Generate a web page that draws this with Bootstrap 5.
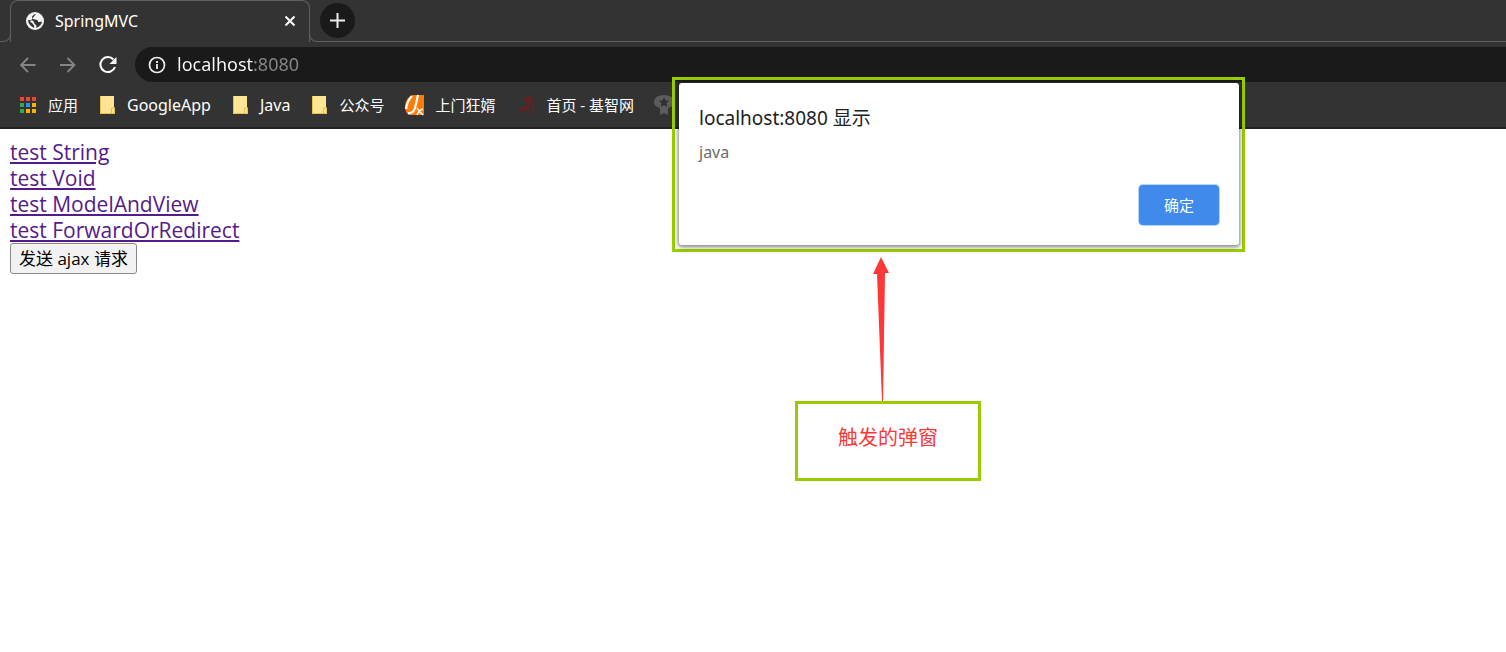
<!DOCTYPE html>
<html lang="zh-CN">
<head>
<meta charset="utf-8">
<meta name="viewport" content="width=device-width, initial-scale=1">
<title>SpringMVC</title>
<link href="https://cdn.jsdelivr.net/npm/bootstrap@5.3.0/dist/css/bootstrap.min.css" rel="stylesheet">
<style>
  body { font-family: "Noto Sans", "Noto Sans CJK SC", sans-serif; font-size: 15px; line-height: 20px; color: #000; background: #fff; }
  svg { display: block; flex: none; }
  button { flex: none; }
  .browser { background: #333; color: #fff; border-bottom: 2px solid #212121; }
  .tab-strip { height: 42px; }
  .strip-line { border-bottom: 1px solid #606060; }
  .tab-edge { width: 11px; border-bottom: 1px solid #606060; border-right: 1px solid #606060; border-bottom-right-radius: 8px; }
  .tab-edge-end { width: 11px; border-bottom: 1px solid #606060; border-left: 1px solid #606060; border-bottom-left-radius: 8px; margin-top: 8px; }
  .tab-edge-start { margin-top: 8px; }
  .page-tab { width: 300px; border: 1px solid #606060; border-width: 1px 1px 0; border-radius: 8px 8px 0 0; padding: 0 13px 2px 14px; margin: 0 -1px; }
  .tab-title, .latin { font-size: 16px; }
  .tab-title { margin-left: 10px; }
  .plain-btn { background: none; border: 0; padding: 0; color: inherit; }
  .plain-btn.new-tab { width: 35px; height: 35px; background: #1a1a1a; }
  .tool-row { height: 40px; padding: 5px 0 0 17px; gap: 18px; }
  .address { height: 35px; background: #1a1a1a; border-radius: 18px 0 0 18px; padding-left: 13px; gap: 11px; margin-left: -2px; }
  .address-input { border: 0; outline: 0; padding: 0 0 2px; height: 28px; font-size: 18px; color: transparent; background: linear-gradient(90deg, #fff 77px, #878787 77px); -webkit-background-clip: text; background-clip: text; }
  .bookmarks { height: 45px; padding-left: 18px; gap: 19px; }
  .bookmarks a { color: #fff; text-decoration: none; white-space: nowrap; gap: 10px; }
  .page { padding: 10px; font-family: "Open Sans", "Noto Sans CJK SC", sans-serif; font-size: 21px; line-height: 26px; }
  .page a { color: #551a8b; text-underline-offset: 2px; text-decoration-thickness: 2px; }
  .ajax-btn { font-size: 17px; line-height: 25px; padding: 2px 8px; border: 1px solid #8a8a8a; border-radius: 3px; background: #f2f2f2; color: #000; }
  .callout { left: 672px; top: 77px; width: 573px; }
  .dialog-frame { border: 3px solid #9c0; padding: 3px 3px 4px 4px; }
  .alert-box { background: #fff; border-radius: 3px; padding: 22px 20px 20px; box-shadow: 0 1px 4px 1px rgba(0,0,0,.5); }
  .alert-title { font-size: 19px; line-height: 26px; color: #202124; margin: 0; font-weight: 400; }
  .alert-text { font-size: 16px; line-height: 24px; color: #6a6a6a; margin: 9px 0 21px; }
  .ok-btn { width: 80px; height: 40px; border: 0; border-radius: 4px; background: #3f8aeb; color: #fff; padding: 0; box-shadow: 0 0 0 1px #b8d4f8; }
  .arrow { margin-left: 201px; }
  .note { border: 3px solid #9c0; width: 186px; height: 80px; margin-left: 123px; padding-bottom: 6px; color: #fb3838; font-size: 20px; }
</style>
</head>
<body>
<div class="position-relative min-vh-100">
  <header class="browser">
    <div class="tab-strip d-flex">
      <div class="tab-edge tab-edge-start"></div>
      <div class="page-tab d-flex align-items-center">
        <svg width="20" height="20" viewBox="0 0 20 20"><circle cx="10" cy="10" r="9" fill="#f5f5f5"/><path d="M11 3Q7 4 7 6.500q1 2 3 2 3 0 3 2 0 1 4 0 0 3-3 5l-3 1.500q1-2 0-3-2-1-2-3-1-2-4-2H3q0 3 2.500 5.500L9 17q1-2-1-4l-3-2.500" fill="#333"/></svg>
        <span class="flex-grow-1 tab-title">SpringMVC</span>
        <button class="plain-btn" aria-label="关闭标签页"><svg width="12" height="12" viewBox="0 0 12 12"><path d="M1.500 1.500l9 9m0-9l-9 9" stroke="#fff" stroke-width="2"/></svg></button>
      </div>
      <div class="tab-edge-end"></div>
      <div class="strip-line flex-grow-1 d-flex align-items-center">
        <button class="plain-btn new-tab rounded-circle d-flex align-items-center justify-content-center" aria-label="新标签页"><svg width="15" height="15" viewBox="0 0 15 15"><path d="M7.500 0v15M0 7.500h15" stroke="#eee" stroke-width="2"/></svg></button>
      </div>
    </div>
    <div class="tool-row d-flex align-items-center">
      <button class="plain-btn" aria-label="后退"><svg width="22" height="22" viewBox="0 0 22 22"><path d="M18.500 11H4m7-7l-7 7 7 7" fill="none" stroke="#858585" stroke-width="1.800"/></svg></button>
      <button class="plain-btn" aria-label="前进"><svg width="22" height="22" viewBox="0 0 22 22"><path d="M3 11h14.500m-7-7l7 7-7 7" fill="none" stroke="#858585" stroke-width="1.800"/></svg></button>
      <button class="plain-btn" aria-label="重新加载"><svg width="22" height="22" viewBox="0 0 22 22"><path d="M16.500 5.500A7.500 7.500 0 1 0 18 13" fill="none" stroke="#fff" stroke-width="2"/><path d="M19.500 3v7h-7z" fill="#fff"/></svg></button>
      <div class="address d-flex align-items-center flex-grow-1">
        <svg width="18" height="18" viewBox="0 0 18 18"><circle cx="9" cy="9" r="7.500" fill="none" stroke="#f0f0f0" stroke-width="1.700"/><path d="M9 8v5M9 5v2" stroke="#f0f0f0" stroke-width="1.800"/></svg>
        <input class="address-input flex-grow-1" type="text" aria-label="地址" value="localhost:8080">
      </div>
    </div>
    <nav class="bookmarks d-flex align-items-center" aria-label="书签">
      <a href="#" class="d-flex align-items-center"><svg width="20" height="20" viewBox="0 0 20 20"><path d="M2 2h4v4H2zM8 2h4v4H8zM14 2h4v4h-4z" fill="#f44336"/><path d="M2 8h4v4H2zM2 14h4v4H2z" fill="#34a853"/><path d="M8 8h4v4H8z" fill="#2196f3"/><path d="M14 8h4v4h-4zM8 14h4v4H8zM14 14h4v4h-4z" fill="#ffb300"/></svg>应用</a>
      <a href="#" class="d-flex align-items-center latin"><svg width="20" height="20" viewBox="0 0 20 20"><path d="M3 1h14v11l1 1v6H3z" fill="#ffe493"/><path d="M3.500 1v17.500h14V13h-3v5" fill="none" stroke="#e6c04b"/></svg>GoogleApp</a>
      <a href="#" class="d-flex align-items-center latin"><svg width="20" height="20" viewBox="0 0 20 20"><path d="M3 1h14v11l1 1v6H3z" fill="#ffe493"/><path d="M3.500 1v17.500h14V13h-3v5" fill="none" stroke="#e6c04b"/></svg>Java</a>
      <a href="#" class="d-flex align-items-center"><svg width="20" height="20" viewBox="0 0 20 20"><path d="M3 1h14v11l1 1v6H3z" fill="#ffe493"/><path d="M3.500 1v17.500h14V13h-3v5" fill="none" stroke="#e6c04b"/></svg>公众号</a>
      <a href="#" class="d-flex align-items-center"><svg width="22" height="22" viewBox="0 0 22 22"><path d="M10 1h11v20H6Q2 19 2 12 3 3 10 1" fill="#ff7b05"/><path d="M9 2Q4 7 3 15M15 1l-3 13q-2 6-7 5" fill="none" stroke="#fff" stroke-width="2.200"/><path d="M14 14q2 4 6 7M20 15q-4 1-6 6" fill="none" stroke="#fff" stroke-width="1.400"/></svg>上门狂婿</a>
      <a href="#" class="d-flex align-items-center"><svg width="22" height="22" viewBox="0 0 22 22"><path d="M20 3Q12 1 12 6q4 4 3 7-3 4-10 3 5-1 8-5M20 3q-6 0-5 4 7 4 4 9-2 3-4 4" fill="none" stroke="#7a1a1c" stroke-width="1.300"/></svg>首页 - 基智网</a>
      <a href="#" aria-label="书签"><svg width="22" height="22" viewBox="0 0 22 22"><path d="M11 1c6 0 10 3 10 7 0 3-2 5-6 6v7l-4-2-4 2v-7c-4-1-6-3-6-6 0-4 4-7 10-7" fill="#5c5c5c"/><path d="M11 3l1.500 3.500h4L13.500 9l1 4-3.500-2-3.500 2 1-4-3-2.500h4z" fill="#303030"/></svg></a>
    </nav>
  </header>
  <main class="page">
    <div><a href="#">test String</a></div>
    <div><a href="#">test Void</a></div>
    <div><a href="#">test ModelAndView</a></div>
    <div><a href="#">test ForwardOrRedirect</a></div>
    <button class="ajax-btn d-block">发送 ajax 请求</button>
  </main>
  <div class="callout position-absolute">
    <div class="dialog-frame">
      <div class="alert-box" role="alertdialog" aria-labelledby="alertTitle">
        <h1 class="alert-title" id="alertTitle">localhost:8080 显示</h1>
        <p class="alert-text">java</p>
        <div class="d-flex justify-content-end"><button class="ok-btn">确定</button></div>
      </div>
    </div>
    <svg class="arrow" width="16" height="149" viewBox="0 0 16 149"><path d="M8 5l8 16h-4L10 149H9L4 22H0z" fill="#fc3838"/></svg>
    <div class="note d-flex align-items-center justify-content-center">触发的弹窗</div>
  </div>
</div>
<script src="https://cdn.jsdelivr.net/npm/bootstrap@5.3.0/dist/js/bootstrap.bundle.min.js"></script>
</body>
</html>
